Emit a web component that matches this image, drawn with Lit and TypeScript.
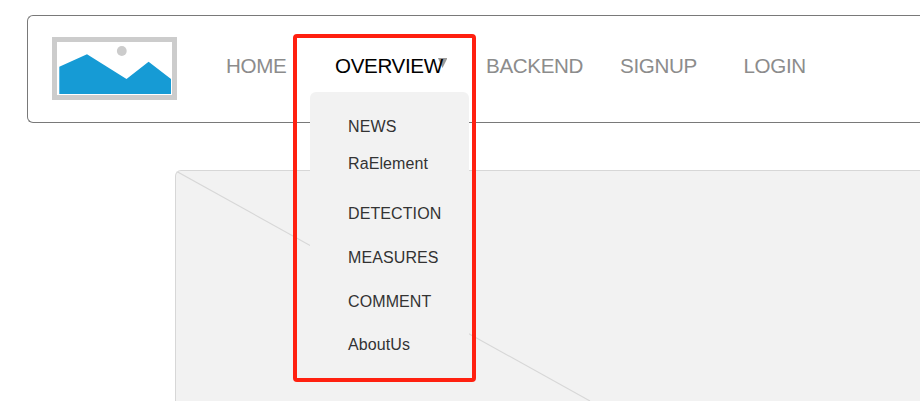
import { LitElement, html, css } from "lit";
import { customElement } from "lit/decorators.js";

@customElement("app-root")
export class AppRoot extends LitElement {
  static styles = css`
    :host {
      display: block;
      position: relative;
      box-sizing: border-box;
      height: 401px;
      padding: 15px 0 0 27px;
      overflow: hidden;
      background: #fff;
      font-family: "Liberation Sans", Arial, sans-serif;
    }
    .header {
      box-sizing: border-box;
      height: 108px;
      border: 1px solid #797979;
      border-right: 0;
      border-radius: 6px 0 0 6px;
      display: flex;
      align-items: flex-start;
      padding: 21px 0 0 24px;
    }
    .logo { display: block; flex: none; }
    .nav {
      display: flex;
      margin: 17px 0 0 49px;
      font-size: 20.6px;
      letter-spacing: -0.35px;
      line-height: 24px;
      color: #8c8c8c;
      white-space: nowrap;
    }
    .home { width: 109px; }
    .overview { width: 151px; color: #000; position: relative; }
    .backend { width: 134px; }
    .signup { width: 123.5px; }
    .arrow { position: absolute; left: 101px; top: 4px; z-index: 0; }
    .label { position: relative; z-index: 1; }
    .menu {
      position: absolute;
      left: -25px;
      top: 38px;
      width: 159px;
      height: 286px;
      box-sizing: border-box;
      padding: 26px 0 0 38px;
      border-radius: 6px;
      background: #f2f2f2;
      color: #333;
      font-size: 16px;
      letter-spacing: 0.1px;
      line-height: 18px;
      z-index: 2;
    }
    .item { height: 18px; margin-bottom: 26px; }
    .item.news { margin-bottom: 19px; }
    .item.element { margin-bottom: 32px; }
    .item.comment { margin-bottom: 25px; }
    .frame {
      position: absolute;
      left: -42px;
      top: -20px;
      width: 183px;
      height: 348px;
      box-sizing: border-box;
      border: 4px solid #ff2010;
      border-radius: 4px;
      z-index: 3;
    }
    .hero {
      box-sizing: border-box;
      height: 231px;
      margin: 47px 0 0 148px;
      border: solid #d7d7d7;
      border-width: 1px 0 0 1px;
      border-radius: 6px 0 0 0;
      background: #f2f2f2;
      overflow: hidden;
    }
    .hero svg { display: block; }
  `;

  render() {
    return html`
      <header class="header">
        <svg class="logo" width="125" height="63" viewBox="0 0 125 63">
          <rect x="2.5" y="2.5" width="120" height="58" fill="#fff" stroke="#ccc" stroke-width="5" />
          <circle cx="69.8" cy="14" r="4.9" fill="#ccc" />
          <polygon points="7.3,29.7 35,17.3 74.5,42 96.6,24.8 119,42 119,57 7.3,57" fill="#169bd5" />
        </svg>
        <nav class="nav">
          <div class="home">HOME</div>
          <div class="overview">
            <svg class="arrow" width="11" height="11" viewBox="0 0 11 11">
              <polygon points="2,0 11.5,0 6.5,10" fill="#999" />
            </svg>
            <span class="label">OVERVIEW</span>
            <div class="menu">
              <div class="item news">NEWS</div>
              <div class="item element">RaElement</div>
              <div class="item">DETECTION</div>
              <div class="item">MEASURES</div>
              <div class="item comment">COMMENT</div>
              <div class="item">AboutUs</div>
            </div>
            <div class="frame"></div>
          </div>
          <div class="backend">BACKEND</div>
          <div class="signup">SIGNUP</div>
          <div>LOGIN</div>
        </nav>
      </header>
      <section class="hero">
        <svg width="744" height="230" viewBox="0 0 744 230">
          <line x1="0" y1="0" x2="414" y2="230" stroke="#d7d7d7" stroke-width="1.1" />
        </svg>
      </section>
    `;
  }
}
